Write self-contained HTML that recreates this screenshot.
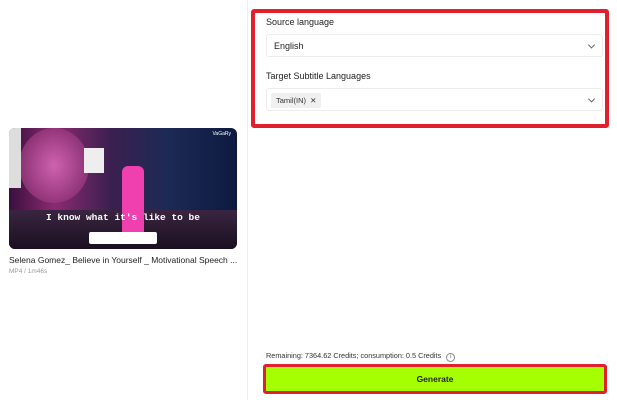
<!DOCTYPE html>
<html><head><style>
*{box-sizing:border-box;margin:0;padding:0}
body{width:617px;height:400px;background:#fff;font-family:"Liberation Sans",sans-serif;position:relative;overflow:hidden;color:#222}
.abs{position:absolute}
.lbl{font-size:9px;color:#222}
.sel{background:#fff;border:1px solid #ececec;border-radius:3px;font-size:9px}
.chev{position:absolute;right:8px;top:50%;width:5px;height:5px;border-right:1px solid #666;border-bottom:1px solid #666;transform:translateY(-70%) rotate(45deg)}
</style></head><body>
<div class="abs" style="left:247px;top:0;width:1px;height:400px;background:#eee"></div>
<div class="abs" style="left:251px;top:9px;width:358px;height:119px;border:4px solid #e0202c;border-radius:3px"></div>
<div class="abs lbl" style="left:266px;top:17px">Source language</div>
<div class="abs sel" style="left:266px;top:34px;width:337px;height:23px"><span style="position:absolute;left:7px;top:6px">English</span><span class="chev"></span></div>
<div class="abs lbl" style="left:266px;top:71px">Target Subtitle Languages</div>
<div class="abs sel" style="left:266px;top:88px;width:337px;height:23px"><span style="position:absolute;left:4px;top:4px;background:#f0f0f0;border-radius:2px;font-size:7.5px;padding:3px 5px;color:#333">Tamil(IN) &nbsp;✕</span><span class="chev"></span></div>
<div class="abs" style="left:9px;top:128px;width:228px;height:121px;border-radius:6px;overflow:hidden;background:linear-gradient(90deg,#3a1040 0%,#8a2a70 20%,#3a2050 45%,#1b2a55 70%,#0d1a40 100%)">
 <div class="abs" style="left:10px;top:0;width:70px;height:75px;border-radius:50%;background:radial-gradient(#e070c0,#7a2060);opacity:.8"></div>
 <div class="abs" style="left:0;top:0;width:12px;height:60px;background:#ddd"></div>
 <div class="abs" style="left:75px;top:20px;width:20px;height:25px;background:#eee"></div>
 <div class="abs" style="left:0;top:82px;width:228px;height:39px;background:linear-gradient(#3a2540,#1a1020)"></div>
 <div class="abs" style="left:113px;top:38px;width:22px;height:72px;background:#f040b0;border-radius:6px 6px 2px 2px"></div>
 <div class="abs" style="left:0;top:84px;width:228px;text-align:center;color:#fff;font-family:'Liberation Mono',monospace;font-size:9.5px;font-weight:bold">I know what it's like to be</div>
 <div class="abs" style="left:80px;top:104px;width:68px;height:12px;background:#fff;border-radius:2px"></div>
 <div class="abs" style="right:6px;top:3px;color:#fff;font-size:5px">VaGaRy</div>
</div>
<div class="abs" style="left:9px;top:255px;font-size:8.5px;color:#222;white-space:nowrap">Selena Gomez_ Believe in Yourself _ Motivational Speech ...</div>
<div class="abs" style="left:9px;top:268px;font-size:6.5px;color:#999">MP4 / 1m46s</div>
<div class="abs" style="left:266px;top:351px;font-size:7.3px;color:#333">Remaining: 7364.62 Credits; consumption: 0.5 Credits <span style="display:inline-block;width:9px;height:9px;border:1px solid #888;border-radius:50%;font-size:6px;text-align:center;line-height:7px;color:#666;margin-left:3px">i</span></div>
<div class="abs" style="left:263px;top:364px;width:344px;height:30px;border:3px solid #e0202c;border-radius:3px;background:#a6ff00;text-align:center;font-size:8.5px;font-weight:bold;line-height:24px;color:#222">Generate</div>
</body></html>
